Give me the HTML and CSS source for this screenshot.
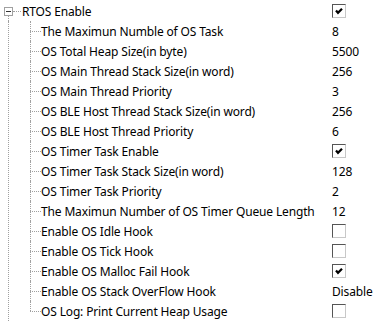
FILE: index.html
```html
<!DOCTYPE html>
<html lang="en">
<head>
  <meta charset="UTF-8">
  <meta name="viewport" content="width=device-width, initial-scale=1.0">
  <title>RTOS Settings</title>
  <link rel="stylesheet" href="styles.css">
</head>
<body>
  <div class="tree">
    <div class="row root-row">
      <span class="twig"><span class="expander"></span><span class="tail"></span></span>
      <span class="stub"></span>
      <span class="label">RTOS Enable</span>
      <span class="value"><span class="check on"><svg width="12" height="12" viewBox="0 0 12 12"><polyline points="3,5.5 5,7.8 9,3.8" fill="none" stroke="#000" stroke-width="2.2"/></svg></span></span>
    </div>
    <div class="branch">
      <ul class="items">
        <li class="row"><span class="elbow"></span><span class="label">The Maximun Numble of OS Task</span><span class="value">8</span></li>
        <li class="row"><span class="elbow"></span><span class="label">OS Total Heap Size(in byte)</span><span class="value">5500</span></li>
        <li class="row"><span class="elbow"></span><span class="label">OS Main Thread Stack Size(in word)</span><span class="value">256</span></li>
        <li class="row"><span class="elbow"></span><span class="label">OS Main Thread Priority</span><span class="value">3</span></li>
        <li class="row"><span class="elbow"></span><span class="label">OS BLE Host Thread Stack Size(in word)</span><span class="value">256</span></li>
        <li class="row"><span class="elbow"></span><span class="label">OS BLE Host Thread Priority</span><span class="value">6</span></li>
        <li class="row"><span class="elbow"></span><span class="label">OS Timer Task Enable</span><span class="value"><span class="check on"><svg width="12" height="12" viewBox="0 0 12 12"><polyline points="3,5.5 5,7.8 9,3.8" fill="none" stroke="#000" stroke-width="2.2"/></svg></span></span></li>
        <li class="row"><span class="elbow"></span><span class="label">OS Timer Task Stack Size(in word)</span><span class="value">128</span></li>
        <li class="row"><span class="elbow"></span><span class="label">OS Timer Task Priority</span><span class="value">2</span></li>
        <li class="row"><span class="elbow"></span><span class="label">The Maximun Number of OS Timer Queue Length</span><span class="value">12</span></li>
        <li class="row"><span class="elbow"></span><span class="label">Enable OS Idle Hook</span><span class="value"><span class="check"></span></span></li>
        <li class="row"><span class="elbow"></span><span class="label">Enable OS Tick Hook</span><span class="value"><span class="check"></span></span></li>
        <li class="row"><span class="elbow"></span><span class="label">Enable OS Malloc Fail Hook</span><span class="value"><span class="check on"><svg width="12" height="12" viewBox="0 0 12 12"><polyline points="3,5.5 5,7.8 9,3.8" fill="none" stroke="#000" stroke-width="2.2"/></svg></span></span></li>
        <li class="row"><span class="elbow"></span><span class="label">Enable OS Stack OverFlow Hook</span><span class="value">Disable</span></li>
        <li class="row"><span class="elbow"></span><span class="label">OS Log: Print Current Heap Usage</span><span class="value"><span class="check"></span></span></li>
      </ul>
    </div>
  </div>
</body>
</html>
```

FILE: styles.css
```css
body {
  margin: 0;
  padding-top: 1px;
  background: #fff;
  color: #000;
  font-family: "Noto Sans", sans-serif;
  font-size: 12px;
  letter-spacing: -0.15px;
}
.row {
  display: flex;
  align-items: center;
  height: 20px;
}
.label {
  flex: 1;
  white-space: nowrap;
}
.value {
  flex: none;
  width: 53px;
  display: flex;
  align-items: center;
}

/* root node */
.twig {
  align-self: stretch;
  display: flex;
  flex-direction: column;
  padding-top: 6px;
  margin-left: 4px;
}
.expander {
  width: 9px;
  height: 9px;
  box-sizing: border-box;
  border: 1px solid #a0a0a0;
  display: flex;
  align-items: center;
  justify-content: center;
}
.expander::after {
  content: "";
  width: 5px;
  height: 1px;
  background: #333;
}
.tail {
  flex: 1;
  margin-left: 4px;
  border-left: 1px dotted #a0a0a0;
}
.stub {
  width: 8px;
  border-top: 1px dotted #a0a0a0;
  margin-right: 1px;
}

/* children */
.branch {
  margin-left: 8px;
  border-left: 1px dotted #a0a0a0;
}
.items {
  list-style: none;
  margin: 0 0 0 21px;
  padding: 0;
}
.elbow {
  align-self: stretch;
  width: 11px;
  display: flex;
  flex-direction: column;
}
.elbow::before,
.elbow::after {
  content: "";
  flex: 1;
  border-left: 1px dotted #a0a0a0;
}
.elbow::after {
  border-top: 1px dotted #a0a0a0;
}
.row:last-child .elbow::after {
  border-left: none;
}

/* checkbox */
.check {
  width: 14px;
  height: 14px;
  box-sizing: border-box;
  border: 1px solid #555;
  border-right-color: #c8c8c8;
  border-bottom-color: #c8c8c8;
  display: flex;
  align-items: center;
  justify-content: center;
}
```
